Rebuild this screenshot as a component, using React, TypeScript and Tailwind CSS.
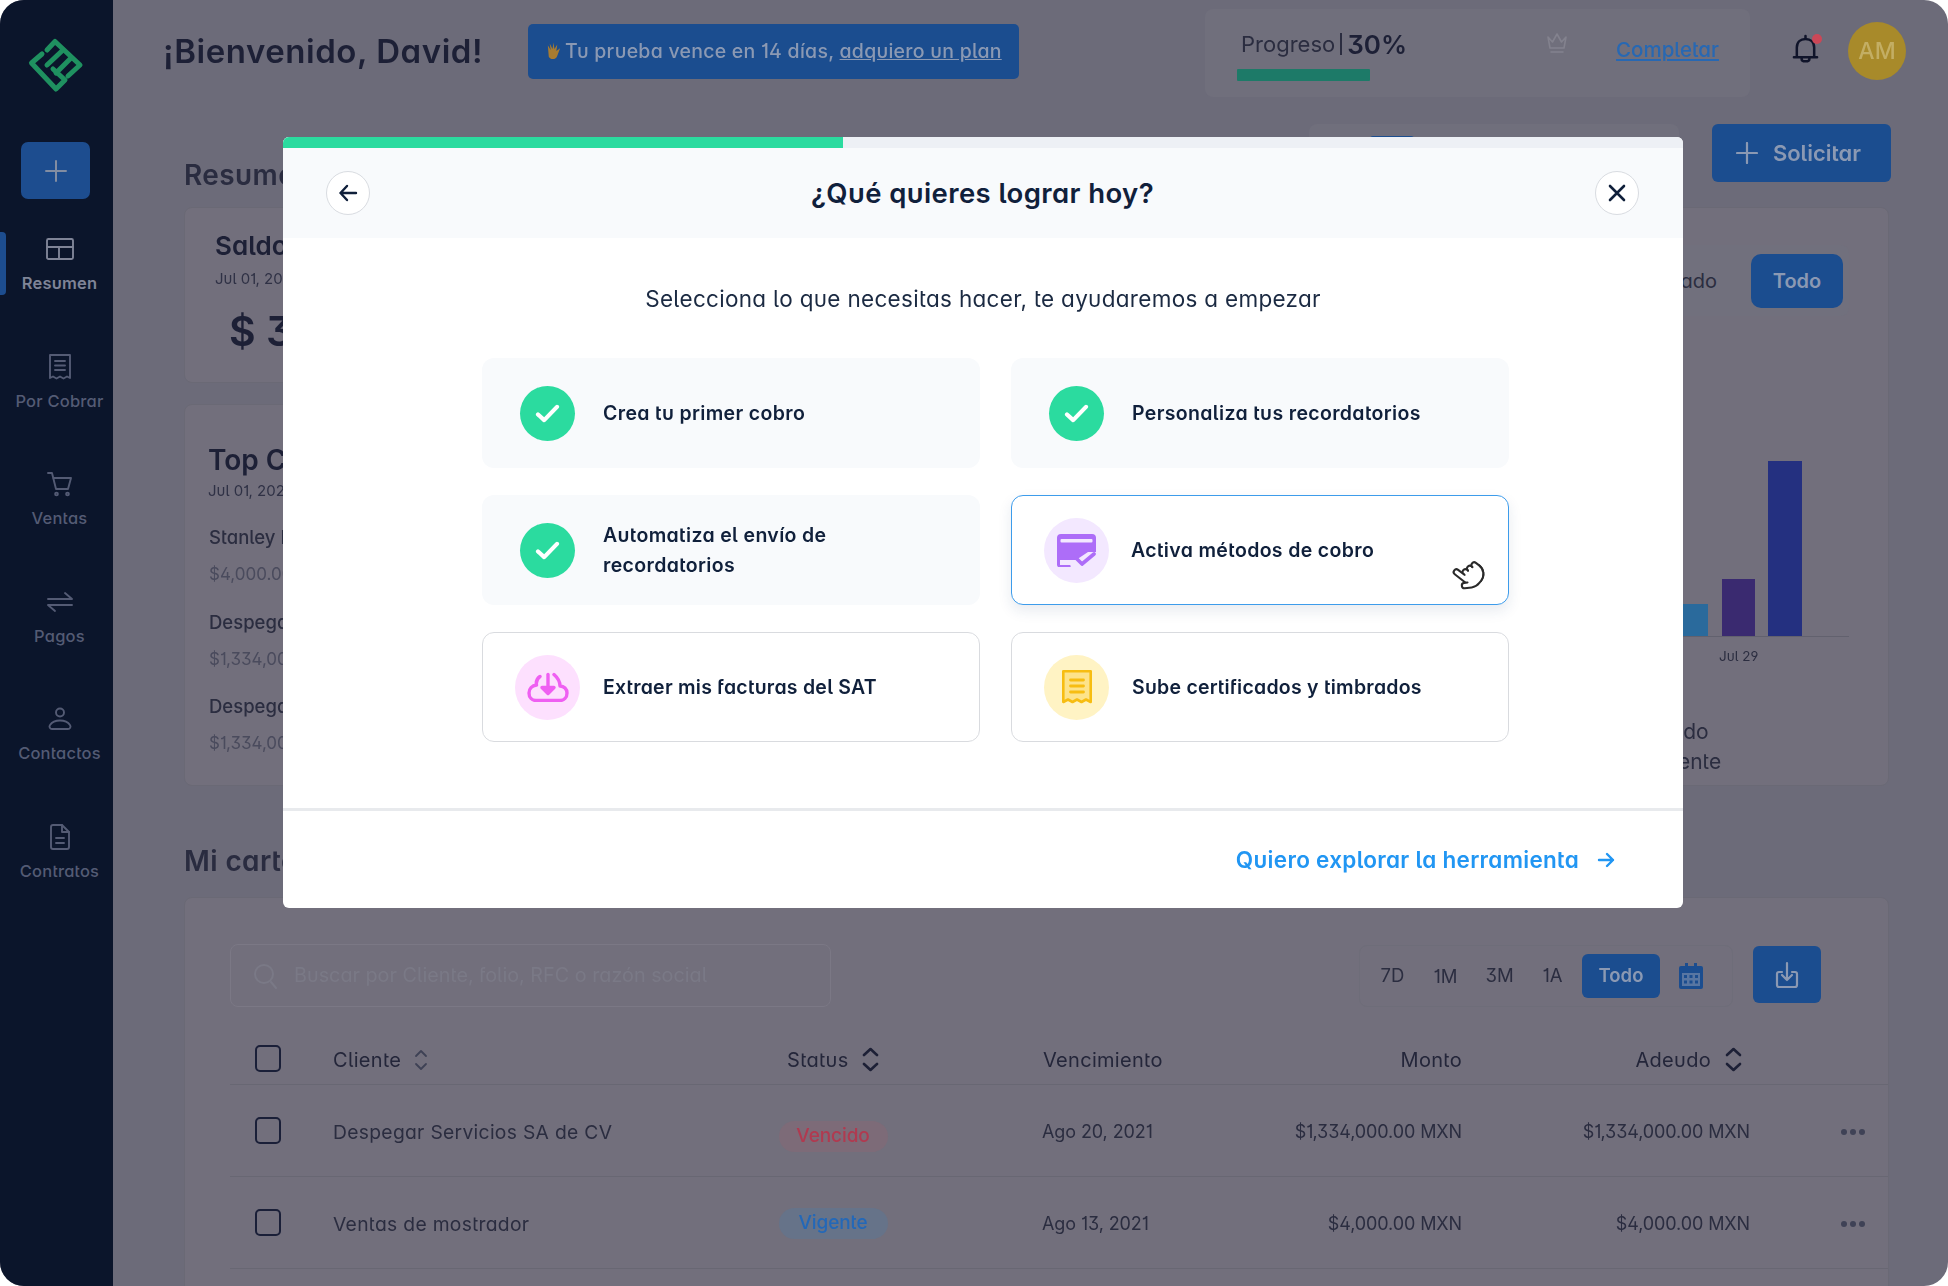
import React from "react";
import { Pointer } from "lucide-react";

const Check = () => (
  <div className="flex h-[55px] w-[55px] items-center justify-center rounded-full bg-[#2bdb9f]">
    <svg viewBox="0 0 26 20" className="h-[19px] w-[25px]" fill="none" stroke="#fff" strokeWidth="4.4" strokeLinecap="round" strokeLinejoin="round">
      <path d="M3 11l6.5 6L23 3" />
    </svg>
  </div>
);

const Cloud = () => (
  <svg viewBox="0 0 42 30" className="h-[30px] w-[42px]" fill="none" stroke="#ef5ff2" strokeWidth="3.4" strokeLinecap="round" strokeLinejoin="round">
    <path d="M13 4.5C10 6.5 9 10 9.5 13C5 13.5 2 16.8 2 21C2 25.5 5 28.5 9 28.5H33C37 28.5 40 25.5 40 21C40 17 37 14 33 14C33 10 31 6 27 2.5" />
    <path d="M21 2.5V19" />
    <path d="M15 15.5L21 21.5L27 15.5Z" fill="#ef5ff2" />
  </svg>
);

const Pay = () => (
  <svg viewBox="0 0 39 33" className="h-[33px] w-[39px]" fill="none">
    <path d="M4 0H35A4 4 0 0 1 39 4V18H31L19 26H3V31H13A1.5 1.5 0 0 1 13 33.5H3A3 3 0 0 1 0 30.5V4A4 4 0 0 1 4 0Z" fill="#ad6df8" />
    <rect x="3.5" y="5" width="32" height="3.6" rx="1" fill="#f3e8ff" />
    <path d="M19 24L25 30L37 20" stroke="#ad6df8" strokeWidth="3.6" strokeLinecap="round" strokeLinejoin="round" />
  </svg>
);

const Receipt = () => (
  <svg viewBox="0 0 30 34" className="h-[34px] w-[30px]" fill="#fde38a" stroke="#f7bd12" strokeWidth="2.6" strokeLinejoin="round" strokeLinecap="round">
    <path d="M1.3 1.3H28.7V32L24 29.5L19.5 32L15 29.5L10.5 32L6 29.5L1.3 32Z" />
    <path d="M8.5 10H21.5M8.5 16H21.5M8.5 22H21.5" fill="none" strokeWidth="2.8" />
  </svg>
);

const Logo = () => (
  <svg viewBox="0 0 72 72" className="h-[72px] w-[72px]" fill="none" stroke="#1f9160" strokeWidth="5" strokeLinecap="round" strokeLinejoin="round">
    <path d="M27 21L35 12.5L60 36L48 47" />
    <path d="M22 25L11.5 34L36 60L45 51L33 40" />
    <path d="M27 36L43 21" />
    <path d="M36 44L51 29" />
  </svg>
);

const NavIcon = ({ k }: { k: string }) => {
  const c = "h-[28px] w-[28px]";
  const s = { fill: "none", stroke: "currentColor", strokeWidth: 1.9, strokeLinecap: "round" as const, strokeLinejoin: "round" as const };
  if (k === "resumen")
    return (
      <svg viewBox="0 0 28 28" className={c} {...s}>
        <rect x="1" y="4" width="26" height="20" rx="1.5" />
        <path d="M1 12H27M13 12V24" />
      </svg>
    );
  if (k === "cobrar")
    return (
      <svg viewBox="0 0 28 28" className={c} {...s}>
        <path d="M4 2H24V25L21 23.5L17.5 25.5L14 23.5L10.5 25.5L7 23.5L4 25Z" />
        <path d="M9 8H19M9 12.5H19M9 17H19" />
      </svg>
    );
  if (k === "ventas")
    return (
      <svg viewBox="0 0 28 28" className={c} {...s}>
        <path d="M2 3H6L10 19H22L25 8H7" />
        <circle cx="10.5" cy="24" r="1.4" />
        <circle cx="21.5" cy="24" r="1.4" />
      </svg>
    );
  if (k === "pagos")
    return (
      <svg viewBox="0 0 28 28" className={c} {...s}>
        <path d="M2 11H26L19 5" />
        <path d="M26 17H2L9 23" />
      </svg>
    );
  if (k === "contactos")
    return (
      <svg viewBox="0 0 28 28" className={c} {...s}>
        <circle cx="14" cy="7.5" r="4" />
        <path d="M6 24H22A2.5 2.5 0 0 0 24 20C22 17 18 15.5 14 15.5C10 15.5 6 17 4 20A2.5 2.5 0 0 0 6 24Z" />
      </svg>
    );
  return (
    <svg viewBox="0 0 28 28" className={c} {...s}>
      <path d="M5 4A2 2 0 0 1 7 2H16L23 9V24A2 2 0 0 1 21 26H7A2 2 0 0 1 5 24Z" />
      <path d="M16 2V9H23M10 15H18M10 20H18" />
    </svg>
  );
};

const nav = [
  { k: "resumen", t: "Resumen", on: true },
  { k: "cobrar", t: "Por Cobrar" },
  { k: "ventas", t: "Ventas" },
  { k: "pagos", t: "Pagos" },
  { k: "contactos", t: "Contactos" },
  { k: "contratos", t: "Contratos" },
];

const Sort = ({ dark }: { dark?: boolean }) =>
  dark ? (
    <svg viewBox="0 0 17 25" className="h-[25px] w-[17px]" fill="none" stroke="#1d2036" strokeWidth="2.6" strokeLinecap="round" strokeLinejoin="round">
      <path d="M2 8L8.5 2L15 8M2 17L8.5 23L15 17" />
    </svg>
  ) : (
    <svg viewBox="0 0 14 22" className="h-[22px] w-[14px]" fill="none" stroke="#3e4155" strokeWidth="1.8" strokeLinecap="round" strokeLinejoin="round">
      <path d="M2 7L7 2L12 7M2 15L7 20L12 15" />
    </svg>
  );

const Box = () => <div className="h-[27px] w-[26px] rounded-[5px] border-[2.5px] border-[#1a1f38]" />;

const Dots = () => (
  <div className="flex gap-[3px]">
    <span className="h-[6px] w-[6px] rounded-full bg-[#3f4256]" />
    <span className="h-[6px] w-[6px] rounded-full bg-[#3f4256]" />
    <span className="h-[6px] w-[6px] rounded-full bg-[#3f4256]" />
  </div>
);

const rowCols = "grid grid-cols-[78px_400px_200px_327px_202px_288px_1fr] items-center pl-[25px]";

const Row = ({ c, b, bc, d, m, pt }: { c: string; b: string; bc: string; d: string; m: string; pt: string }) => (
  <div className={`${rowCols} h-[92px] border-b border-[#686773] text-[18px] tracking-[-0.1px] text-[#2b2d40]`}>
    <Box />
    <div className="pt-[3px] text-[19.3px] tracking-[0.3px]">{c}</div>
    <div className={`flex justify-center ${pt}`}>
      <span className={`flex h-[31px] w-[109px] items-center justify-center rounded-full text-[19px] font-medium ${bc}`}>{b}</span>
    </div>
    <div className="pl-[109px] pt-[2px]">{d}</div>
    <div className="pt-[2px] text-right">{m}</div>
    <div className="pt-[2px] text-right">{m}</div>
    <div className="flex justify-end pr-[23px] pt-[2px]">
      <Dots />
    </div>
  </div>
);

const CardItem = ({ done, icon, bg, children, active }: { done?: boolean; icon?: React.ReactNode; bg?: string; children: React.ReactNode; active?: boolean }) => (
  <div
    className={
      done
        ? "flex h-[110px] items-center gap-[28px] rounded-[12px] bg-[#f8fafc] pl-[38px] text-[19.5px] font-semibold leading-[30px] tracking-[0.35px] text-[#10203b]"
        : active
          ? "relative flex h-[110px] items-center gap-[22px] rounded-[12px] border-[1.5px] border-[#3d9ceb] bg-white pl-[32px] text-[19.5px] font-semibold leading-[30px] tracking-[0.35px] text-[#10203b] shadow-[0_6px_14px_rgba(30,60,110,0.10)]"
          : "flex h-[110px] items-center gap-[23px] rounded-[12px] border-[1.5px] border-[#d9dbdf] bg-white pl-[32px] text-[19.5px] font-semibold leading-[30px] tracking-[0.25px] text-[#10203b]"
    }
  >
    {done ? <Check /> : <div className={`flex h-[65px] w-[65px] items-center justify-center rounded-full ${bg}`}>{icon}</div>}
    <div>{children}</div>
    {active && <Pointer className="absolute left-[440px] top-[62px] h-[33px] w-[33px] -rotate-[52deg] fill-white stroke-[#2a2a2a]" strokeWidth={1.5} />}
  </div>
);

export default function App() {
  return (
    <div className="relative h-[1286px] w-[1948px] overflow-hidden bg-white font-[Inter,sans-serif] [font-feature-settings:'cv11','salt']">
      <div className="flex h-full overflow-hidden rounded-[24px] bg-[#6c6b79]">
        <aside className="flex w-[113px] shrink-0 flex-col bg-[#0b152b]">
          <div className="flex h-[130px] justify-center pr-[2px] pt-[29px]">
            <Logo />
          </div>
          <div className="ml-[21px] mt-[12px] flex h-[57px] w-[69px] items-center justify-center rounded-[7px] bg-[#1d4d8f]">
            <svg viewBox="0 0 22 22" className="h-[22px] w-[22px]" fill="none" stroke="#828da2" strokeWidth="2" strokeLinecap="round">
              <path d="M11 1V21M1 11H21" />
            </svg>
          </div>
          <nav className="mt-[30px] flex flex-col">
            {nav.map((n) => (
              <div key={n.k} className={`relative flex h-[117.5px] flex-col items-center pl-[6px] pt-[6px] ${n.on ? "text-[#7f8497]" : "text-[#545b74]"}`}>
                {n.on && <span className="absolute left-0 top-[3px] h-[63px] w-[6px] rounded-r-[4px] bg-[#1d4d8f]" />}
                <NavIcon k={n.k} />
                <span className={`mt-[9px] whitespace-nowrap text-[16.5px] leading-[22px] tracking-[0.2px] ${n.on ? "font-semibold" : "font-medium"}`}>{n.t}</span>
              </div>
            ))}
          </nav>
        </aside>

        <main className="min-w-0 flex-1 blur-[0.5px]">
          <header className="flex h-[102px] items-center pl-[50px]">
            <h1 className="mt-[2px] w-[365px] shrink-0 whitespace-nowrap text-[33px] font-semibold tracking-[0.55px] text-[#1d2036]">¡Bienvenido, David!</h1>
            <div className="flex h-[55px] w-[491px] shrink-0 items-center rounded-[5px] bg-[#1b4d8f] pl-[17px] text-[19.5px] font-medium tracking-[0.25px] text-[#8b99b3]">
              <svg viewBox="0 0 18 20" className="mr-[3px] h-[20px] w-[17px]" fill="#a87c31">
                <path d="M3 4L6 9L5 2L8 8L9 1L10 8L13 3L12 10L16 7L13 15C12 19 6 20 4 16Z" />
              </svg>
              <span className="whitespace-nowrap pt-[2px]">
                Tu prueba vence en 14 días, <span className="underline">adquiero un plan</span>
              </span>
            </div>
            <div className="ml-[186px] mt-[4px] flex h-[88px] w-[545px] shrink-0 rounded-[8px] bg-[#706f7c] pl-[32px] pr-[31px]">
              <div className="flex flex-col pt-[18px]">
                <div className="flex h-[34px] items-center whitespace-nowrap pl-[4px] text-[22px] text-[#2b2d40]">
                  Progreso <span className="mx-[5px] h-[22px] w-[2px] bg-[#2b2d40]" />
                  <span className="text-[26px] font-semibold text-[#1d2036]">30%</span>
                </div>
                <div className="mt-[8px] h-[12px] w-[133px] rounded-[1px] bg-[#1d7a68]" />
              </div>
              <div className="ml-[138px] flex items-start pt-[22px]">
                <svg viewBox="0 0 24 24" className="h-[24px] w-[24px]" fill="none" stroke="#83828e" strokeWidth="1.6" strokeLinejoin="round" strokeLinecap="round">
                  <path d="M3 6L7.5 11L12 3L16.5 11L21 6L19 17H5ZM6 21H18" />
                </svg>
              </div>
              <div className="ml-[47px] flex items-start pt-[26px] text-[20.5px] font-medium text-[#2768b3] underline">Completar</div>
            </div>
            <div className="relative ml-[42px] mt-[-4px] shrink-0">
              <svg viewBox="0 0 28 32" className="h-[31px] w-[27px]" fill="none" stroke="#10142a" strokeWidth="2.6" strokeLinecap="round" strokeLinejoin="round">
                <path d="M14 2V4M5 24V14C5 8 9 5 14 5C19 5 23 8 23 14V24M2 24H26M10 24V26C10 29 18 29 18 26V24" />
              </svg>
              <span className="absolute right-[-3px] top-0 h-[10px] w-[10px] rounded-full bg-[#cb4757]" />
            </div>
            <div className="ml-[29px] flex h-[58px] w-[58px] shrink-0 items-center justify-center rounded-full bg-[#a88a2a] text-[23px] font-medium text-[#c3ae64]">AM</div>
          </header>

          <div className="pl-[71px] pr-[57px]">
            <div className="mt-[22px] flex h-[58px] items-center">
              <h2 className="mt-[44px] text-[28px] font-semibold tracking-[0.4px] text-[#2a2c40]">Resumen</h2>
              <div className="ml-auto mr-[33px] flex h-[58px] w-[370px] self-start rounded-[8px] bg-[#706f7c] pl-[61px] pt-[12px]">
                <div className="h-[30px] w-[44px] rounded-[3px] bg-[#1b4d8f]" />
              </div>
              <button className="flex h-[58px] w-[179px] items-center justify-center gap-[15px] rounded-[6px] bg-[#1b4d8f] pr-[6px] text-[22px] font-semibold text-[#8b99b3]">
                <svg viewBox="0 0 22 22" className="h-[22px] w-[22px]" fill="none" stroke="#8b99b3" strokeWidth="2.2" strokeLinecap="round">
                  <path d="M11 1V21M1 11H21" />
                </svg>
                Solicitar
              </button>
            </div>

            <div className="mr-[2px] mt-[25px] grid h-[579px] grid-cols-[520px_1fr] gap-[21px]">
              <div className="flex flex-col gap-[21px]">
                <section className="h-[176px] rounded-[8px] border border-[#6a6975] bg-[#726f7c] pl-[30px] pt-[21px]">
                  <div className="whitespace-nowrap text-[26px] font-semibold leading-[34px] text-[#1d2036]">Saldo</div>
                  <div className="mt-[6px] whitespace-nowrap text-[15px] leading-[20px] text-[#2f3145]">Jul 01, 2021</div>
                  <div className="mt-[17px] whitespace-nowrap pl-[14px] text-[41px] font-semibold leading-[50px] text-[#1d2036]">$ 3,120,000</div>
                </section>
                <section className="flex-1 rounded-[8px] border border-[#6a6975] bg-[#726f7c] pl-[23px] pt-[37px]">
                  <div className="whitespace-nowrap text-[28px] font-semibold leading-[36px] text-[#1d2036]">Top Clientes</div>
                  <div className="mt-[3px] whitespace-nowrap text-[15px] leading-[20px] text-[#2f3145]">Jul 01, 2021</div>
                  <div className="mt-[23px] pl-[1px]">
                    {[
                      ["Stanley Black", "$4,000.00 MXN"],
                      ["Despegar Servicios", "$1,334,000.00 MXN"],
                      ["Despegar Servicios", "$1,334,000.00 MXN"],
                    ].map(([a, b], i) => (
                      <div key={i} className="h-[84.5px] whitespace-nowrap">
                        <div className="text-[18.5px] font-medium leading-[26px] text-[#2b2d40]">{a}</div>
                        <div className="mt-[12px] text-[17px] leading-[24px] text-[#4a4b5d]">{b}</div>
                      </div>
                    ))}
                  </div>
                </section>
              </div>
              <section className="flex flex-col rounded-[8px] border border-[#6a6975] bg-[#726f7c] pl-[860px] pr-[39px]">
                <div className="relative mt-[37px] flex h-[71px] items-center justify-end rounded-[8px] bg-[#71707d] pr-[6px]">
                  <span className="mr-[34px] text-[20px] text-[#2b2d40]">Pagado</span>
                  <span className="flex h-[54px] w-[92px] items-center justify-center rounded-[10px] bg-[#1b4d8f] text-[20px] font-semibold text-[#8b99b3]">Todo</span>
                </div>
                <div className="mt-[146px] flex h-[175px] items-end gap-[13.5px] border-b border-[#62616e] pl-[88px]">
                  <div className="h-[32px] w-[34px] bg-[#2a6a9c]" />
                  <div className="h-[57px] w-[33px] bg-[#3a2a70]" />
                  <div className="h-[175px] w-[34px] bg-[#243080]" />
                </div>
                <div className="ml-[133px] mt-[9px] text-[13.5px] leading-[20px] text-[#2b2d40]">Jul 29</div>
                <div className="ml-[36px] mt-[54px] flex flex-col gap-[7px] text-[21px] leading-[23px] text-[#2b2d40]">
                  <span>Cobrado</span>
                  <span>Pendiente</span>
                </div>
              </section>
            </div>

            <h2 className="mt-[55px] text-[28px] font-semibold leading-[40px] tracking-[0.4px] text-[#2a2c40]">Mi cartera</h2>

            <section className="mr-[2px] mt-[16px] h-[420px] rounded-t-[8px] border border-[#6a6975] bg-[#726f7c] pl-[45px] pt-[46px]">
              <div className="flex items-start">
                <div className="flex h-[63px] w-[601px] items-center gap-[17px] rounded-[8px] border border-[#7b7885] pl-[22px] text-[19.8px] text-[#7a7986]">
                  <svg viewBox="0 0 24 28" className="h-[28px] w-[24px]" fill="none" stroke="#7a7986" strokeWidth="2" strokeLinecap="round">
                    <circle cx="11" cy="12" r="9" />
                    <path d="M18 20L23 26" />
                  </svg>
                  Buscar por Cliente, folio, RFC o razón social
                </div>
                <div className="ml-[528px] mt-[1px] flex h-[62px] w-[374px] items-center rounded-[8px] border border-[#6e6d79] pl-[10px] text-[18.5px] text-[#2b2d40]">
                  <span className="w-[45px] text-center">7D</span>
                  <span className="ml-[8px] w-[45px] pt-[2px] text-center">1M</span>
                  <span className="ml-[9px] w-[45px] text-center">3M</span>
                  <span className="ml-[8px] w-[45px] text-center">1A</span>
                  <span className="ml-[7px] flex h-[44px] w-[78px] items-center justify-center rounded-[6px] bg-[#1b4d8f] font-semibold text-[#8b99b3]">Todo</span>
                  <svg viewBox="0 0 24 28" className="ml-[19px] h-[28px] w-[24px]" fill="#1b4d8f">
                    <path d="M2 4H6V1H9V4H15V1H18V4H22A2 2 0 0 1 24 6V25A2 2 0 0 1 22 27H2A2 2 0 0 1 0 25V6A2 2 0 0 1 2 4Z" />
                    <rect x="3" y="11" width="18" height="13" fill="#8b99b3" opacity="0.55" />
                    <path d="M5 13h3v3H5zM10.5 13h3v3h-3zM16 13h3v3h-3zM5 18.5h3v3H5zM10.5 18.5h3v3h-3zM16 18.5h3v3h-3z" fill="#1b4d8f" />
                  </svg>
                </div>
                <div className="ml-[20px] mt-[2px] flex h-[57px] w-[68px] items-center justify-center rounded-[6px] bg-[#1b4d8f]">
                  <svg viewBox="0 0 24 28" className="h-[28px] w-[24px]" fill="none" stroke="#8b99b3" strokeWidth="2.2" strokeLinecap="round" strokeLinejoin="round">
                    <path d="M7 11H4A2 2 0 0 0 2 13V24A2 2 0 0 0 4 26H20A2 2 0 0 0 22 24V13A2 2 0 0 0 20 11H17M12 2V19M7 14L12 19L17 14" />
                  </svg>
                </div>
              </div>

              <div className={`${rowCols} mt-[28px] h-[50px] border-b border-[#686773] text-[20px] tracking-[0.3px] text-[#24263a]`}>
                <div className="pb-[3px]">
                  <Box />
                </div>
                <div className="flex items-center gap-[13px]">
                  Cliente <Sort />
                </div>
                <div className="flex items-center gap-[13px] pl-[54px]">
                  Status <Sort dark />
                </div>
                <div className="pl-[110px]">Vencimiento</div>
                <div className="text-right">Monto</div>
                <div className="flex items-center justify-end gap-[14px] pr-[8px]">
                  Adeudo <Sort dark />
                </div>
                <div />
              </div>
              <Row c="Despegar Servicios SA de CV" b="Vencido" bc="bg-[#7d6b78] text-[#b03a50]" d="Ago 20, 2021" m="$1,334,000.00 MXN" pt="pt-[11px]" />
              <Row c="Ventas de mostrador" b="Vigente" bc="bg-[#667389] text-[#2368b8]" d="Ago 13, 2021" m="$4,000.00 MXN" pt="pt-[1px]" />
            </section>
          </div>
        </main>
      </div>

      <div className="absolute left-[283px] top-[137px] flex h-[771px] w-[1400px] flex-col overflow-hidden rounded-[6px] bg-white">
        <div className="h-[11px] bg-[#edf0f5]">
          <div className="h-full w-[40%] bg-[#2bdb9f]" />
        </div>
        <div className="flex h-[90px] items-center justify-between bg-[#f8fafc] pl-[43px] pr-[44px]">
          <button className="flex h-[44px] w-[44px] items-center justify-center rounded-full border border-[#d9dce1] bg-white">
            <svg viewBox="0 0 20 20" className="h-[20px] w-[20px]" fill="none" stroke="#0f1f3a" strokeWidth="2.4" strokeLinecap="round" strokeLinejoin="round">
              <path d="M18 10H2.5M9 3L2.5 10L9 17" />
            </svg>
          </button>
          <h3 className="pt-[1px] text-[27.5px] font-semibold tracking-[0.4px] text-[#10203b]">¿Qué quieres lograr hoy?</h3>
          <button className="flex h-[44px] w-[44px] items-center justify-center rounded-full border border-[#d9dce1] bg-white">
            <svg viewBox="0 0 20 20" className="h-[20px] w-[20px]" fill="none" stroke="#0f1f3a" strokeWidth="2.6" strokeLinecap="round">
              <path d="M3 3L17 17M17 3L3 17" />
            </svg>
          </button>
        </div>
        <p className="mt-[44px] text-center text-[22.5px] leading-[34px] tracking-[0.3px] text-[#1b2a42]">Selecciona lo que necesitas hacer, te ayudaremos a empezar</p>
        <div className="ml-[199px] mt-[42px] grid w-[1027px] grid-cols-2 gap-x-[31px] gap-y-[27px]">
          <CardItem done>Crea tu primer cobro</CardItem>
          <CardItem done>Personaliza tus recordatorios</CardItem>
          <CardItem done>
            Automatiza el envío de
            <br />
            recordatorios
          </CardItem>
          <CardItem active bg="bg-[#f3e8ff]" icon={<Pay />}>
            Activa métodos de cobro
          </CardItem>
          <CardItem bg="bg-[#fde0fe]" icon={<Cloud />}>
            Extraer mis facturas del SAT
          </CardItem>
          <CardItem bg="bg-[#fff3c4]" icon={<Receipt />}>
            Sube certificados y timbrados
          </CardItem>
        </div>
        <div className="mt-[66px] flex flex-1 items-center justify-end gap-[18px] border-t-[3px] border-[#e8eaed] pr-[68px] text-[22.5px] font-semibold tracking-[0.3px] text-[#2196f3]">
          Quiero explorar la herramienta
          <svg viewBox="0 0 18 18" className="h-[18px] w-[18px]" fill="none" stroke="#2196f3" strokeWidth="2.4" strokeLinecap="round" strokeLinejoin="round">
            <path d="M2 9H16M10 3L16 9L10 15" />
          </svg>
        </div>
      </div>
    </div>
  );
}
